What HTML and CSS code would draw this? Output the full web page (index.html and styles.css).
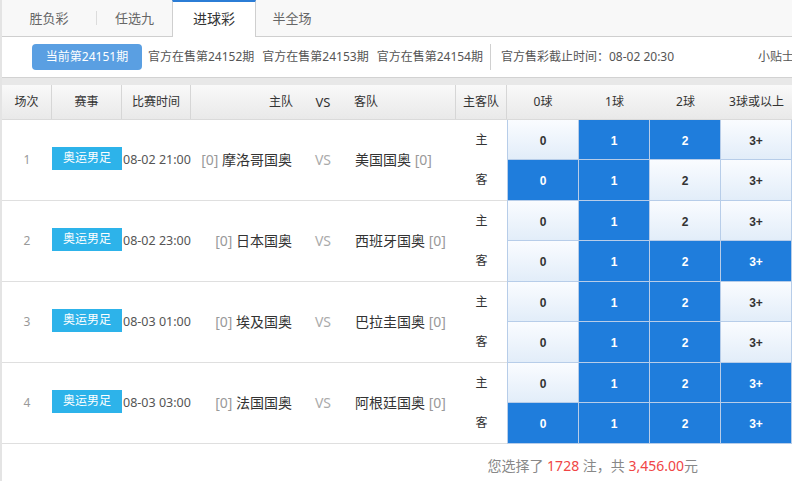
FILE: index.html
```html
<!DOCTYPE html>
<html lang="zh-CN">
<head>
<meta charset="utf-8">
<title>进球彩</title>
<link rel="stylesheet" href="styles.css">
</head>
<body>
<div class="page">
  <nav class="tabs">
    <a class="tab tab-sfc">胜负彩</a>
    <span class="tab-sep"></span>
    <a class="tab tab-rx9">任选九</a>
    <a class="tab tab-jqc active">进球彩</a>
    <a class="tab tab-bqc">半全场</a>
  </nav>

  <div class="issues">
    <span class="issue-current">当前第24151期</span>
    <a class="issue">官方在售第24152期</a>
    <a class="issue">官方在售第24153期</a>
    <a class="issue">官方在售第24154期</a>
    <span class="issues-sep"></span>
    <span class="deadline">官方售彩截止时间：08-02 20:30</span>
    <span class="tips">小贴士</span>
  </div>

  <div class="band"></div>

  <div class="head">
    <div class="h h-line">场次</div>
    <div class="h h-line">赛事</div>
    <div class="h h-line">比赛时间</div>
    <div class="h h-home">主队</div>
    <div class="h h-vs">VS</div>
    <div class="h h-away h-line">客队</div>
    <div class="h h-line">主客队</div>
    <div class="h">0球</div>
    <div class="h">1球</div>
    <div class="h">2球</div>
    <div class="h">3球或以上</div>
  </div>

  <div class="match">
    <div class="c c-no">1</div>
    <div class="c c-league"><span class="badge">奥运男足</span></div>
    <div class="c c-time">08-02 21:00</div>
    <div class="c c-home"><span class="rank">[0]</span>&nbsp;摩洛哥国奥</div>
    <div class="c c-vs">VS</div>
    <div class="c c-away">美国国奥&nbsp;<span class="rank">[0]</span></div>
    <div class="side side-home">主</div>
    <div class="g g-first">0</div>
    <div class="g sel">1</div>
    <div class="g sel">2</div>
    <div class="g">3+</div>
    <div class="side side-away">客</div>
    <div class="g g-first sel">0</div>
    <div class="g sel">1</div>
    <div class="g">2</div>
    <div class="g">3+</div>
  </div>

  <div class="match">
    <div class="c c-no">2</div>
    <div class="c c-league"><span class="badge">奥运男足</span></div>
    <div class="c c-time">08-02 23:00</div>
    <div class="c c-home"><span class="rank">[0]</span>&nbsp;日本国奥</div>
    <div class="c c-vs">VS</div>
    <div class="c c-away">西班牙国奥&nbsp;<span class="rank">[0]</span></div>
    <div class="side side-home">主</div>
    <div class="g g-first">0</div>
    <div class="g sel">1</div>
    <div class="g">2</div>
    <div class="g">3+</div>
    <div class="side side-away">客</div>
    <div class="g g-first">0</div>
    <div class="g sel">1</div>
    <div class="g sel">2</div>
    <div class="g sel">3+</div>
  </div>

  <div class="match">
    <div class="c c-no">3</div>
    <div class="c c-league"><span class="badge">奥运男足</span></div>
    <div class="c c-time">08-03 01:00</div>
    <div class="c c-home"><span class="rank">[0]</span>&nbsp;埃及国奥</div>
    <div class="c c-vs">VS</div>
    <div class="c c-away">巴拉圭国奥&nbsp;<span class="rank">[0]</span></div>
    <div class="side side-home">主</div>
    <div class="g g-first">0</div>
    <div class="g sel">1</div>
    <div class="g sel">2</div>
    <div class="g">3+</div>
    <div class="side side-away">客</div>
    <div class="g g-first">0</div>
    <div class="g sel">1</div>
    <div class="g sel">2</div>
    <div class="g">3+</div>
  </div>

  <div class="match">
    <div class="c c-no">4</div>
    <div class="c c-league"><span class="badge">奥运男足</span></div>
    <div class="c c-time">08-03 03:00</div>
    <div class="c c-home"><span class="rank">[0]</span>&nbsp;法国国奥</div>
    <div class="c c-vs">VS</div>
    <div class="c c-away">阿根廷国奥&nbsp;<span class="rank">[0]</span></div>
    <div class="side side-home">主</div>
    <div class="g g-first">0</div>
    <div class="g sel">1</div>
    <div class="g sel">2</div>
    <div class="g sel">3+</div>
    <div class="side side-away">客</div>
    <div class="g g-first sel">0</div>
    <div class="g sel">1</div>
    <div class="g sel">2</div>
    <div class="g sel">3+</div>
  </div>

  <div class="summary">
    <span>您选择了&nbsp;<em class="num">1728</em>&nbsp;注，共&nbsp;<em class="num">3,456.00</em>元</span>
  </div>
</div>
</body>
</html>
```

FILE: styles.css
```css
* {
  box-sizing: border-box;
  margin: 0;
  padding: 0;
}

html, body {
  background: #fff;
}

body {
  font-family: "Noto Sans", "Noto Sans CJK SC", sans-serif;
  color: #333;
  overflow: hidden;
}

.page {
  width: 792px;
  height: 481px;
  border-left: 2px solid #e4e4e4;
  overflow: hidden;
}

/* ---------- tabs ---------- */
.tabs {
  display: flex;
  align-items: flex-start;
  height: 37px;
  background: #f8f8f8;
  border-bottom: 1px solid #cfcfcf;
}

.tab {
  display: flex;
  align-items: center;
  justify-content: center;
  flex-shrink: 0;
  height: 36px;
  font-size: 13px;
  color: #666;
  line-height: 1;
}

.tab-sfc { width: 94px; }
.tab-rx9 { width: 75px; }
.tab-bqc { width: 72px; }

.tab-sep {
  flex-shrink: 0;
  width: 1px;
  height: 14px;
  margin-top: 11px;
  background: #dcdcdc;
}

.tab.active {
  width: 84px;
  height: 37px;
  margin-bottom: -1px;
  background: #fff;
  border-top: 2px solid #2b7dd6;
  border-left: 1px solid #cfcfcf;
  border-right: 1px solid #cfcfcf;
  padding-bottom: 2px;
  font-size: 14px;
  color: #333;
}

/* ---------- issues bar ---------- */
.issues {
  display: flex;
  align-items: center;
  height: 40px;
  padding-left: 30px;
  font-size: 12px;
  color: #555;
  white-space: nowrap;
  line-height: 1;
}

.issues > * {
  flex-shrink: 0;
}

.issue-current {
  width: 110px;
  height: 26px;
  line-height: 26px;
  text-align: center;
  background: #5a9fe2;
  color: #fff;
  border-radius: 4px;
}

.issue-current + .issue { margin-left: 6px; }
.issue + .issue { margin-left: 8px; }

.issues-sep {
  width: 1px;
  height: 26px;
  margin-left: 7px;
  background: #d0d0d0;
}

.deadline { margin-left: 10px; }
.tips { margin-left: 84px; }

.band {
  height: 8px;
  background: #e8e8e8;
  border-top: 1px solid #d2d2d2;
}

/* ---------- grid columns ---------- */
.head,
.match {
  display: grid;
  grid-template-columns: 50px 70px 69px 111px 42px 112px 51px 72px 71px 71px 71px;
}

.head {
  height: 35px;
  background: linear-gradient(#f9f9f9, #e9e9e9);
  border-bottom: 1px solid #dadada;
  font-size: 12px;
  color: #333;
}

.h {
  display: flex;
  align-items: center;
  justify-content: center;
  line-height: 1;
}

.h-line { border-right: 1px solid #d6d6d6; }

.h-home {
  justify-content: flex-end;
  padding-right: 9px;
}

.h-vs { font-size: 13px; }

.h-away {
  justify-content: flex-start;
  padding-left: 10px;
}

/* ---------- match rows ---------- */
.match {
  grid-template-rows: 40px 41px;
}

.c {
  grid-row: span 2;
  display: flex;
  align-items: center;
  justify-content: center;
  border-bottom: 1px solid #dfdfdf;
  white-space: nowrap;
  line-height: 1;
}

.c-no {
  font-size: 12px;
  color: #999;
}

.c-league {
  justify-content: flex-start;
  padding-bottom: 4px;
}

.badge {
  display: flex;
  align-items: center;
  justify-content: center;
  width: 70px;
  height: 23px;
  background: #2db3ea;
  color: #fff;
  font-size: 12px;
}

.c-time {
  justify-content: flex-start;
  padding-left: 1px;
  font-size: 12.5px;
  color: #555;
}

.c-home {
  justify-content: flex-end;
  padding-right: 10px;
  font-size: 14px;
  color: #333;
}

.c-vs {
  font-size: 14px;
  color: #aaa;
}

.c-away {
  justify-content: flex-start;
  padding-left: 11px;
  font-size: 14px;
  color: #333;
}

.rank {
  color: #999;
}

.side {
  display: flex;
  align-items: center;
  justify-content: center;
  font-size: 12px;
  color: #333;
  line-height: 1;
}

.side-away { border-bottom: 1px solid #dfdfdf; }

.g {
  display: flex;
  align-items: center;
  justify-content: center;
  padding-top: 2px;
  border-right: 1px solid #b7cde9;
  border-bottom: 1px solid #b7cde9;
  background: linear-gradient(#fafcff, #e2edf9);
  font-family: "Liberation Sans", Arial, sans-serif;
  font-weight: bold;
  font-size: 12px;
  color: #333;
  line-height: 1;
}

.g-first { border-left: 1px solid #b7cde9; }

.g.sel {
  background: #1f7ddc;
  color: #fff;
}

/* ---------- summary ---------- */
.summary {
  display: flex;
  justify-content: flex-end;
  padding: 12px 94px 0 0;
  font-size: 14px;
  line-height: 20px;
  color: #888;
}

.num {
  font-style: normal;
  color: #f04545;
}
```
